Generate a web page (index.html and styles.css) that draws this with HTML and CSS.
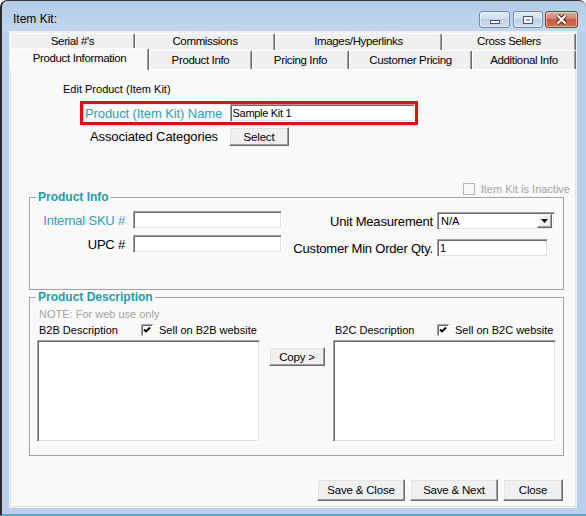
FILE: index.html
```html
<!DOCTYPE html>
<html lang="en">
<head>
<meta charset="UTF-8">
<title>Item Kit</title>
<link rel="stylesheet" href="styles.css">
</head>
<body>
<div class="window">
  <div class="title-bar">
    <span class="title">Item Kit:</span>
    <div class="caption-btns">
      <span class="cap-btn cap-min"><i></i></span>
      <span class="cap-btn cap-max"><i></i></span>
      <span class="cap-btn cap-close">
        <svg width="13" height="11" viewBox="0 0 13 11"><path d="M2.5 1.5L10.5 9.5M10.5 1.5L2.5 9.5" stroke="#5b2418" stroke-width="4.2" fill="none"/><path d="M2.5 1.5L10.5 9.5M10.5 1.5L2.5 9.5" stroke="#fff" stroke-width="2.2" fill="none"/></svg>
      </span>
    </div>
  </div>
  <div class="client">
    <div class="tab-row back">
      <div class="tab" style="width:125px">Serial #'s</div>
      <div class="tab" style="width:140px">Commissions</div>
      <div class="tab" style="width:167px">Images/Hyperlinks</div>
      <div class="tab" style="width:134px">Cross Sellers</div>
    </div>
    <div class="tab-row front">
      <div class="tab selected" style="width:139px">Product Information</div>
      <div class="tab" style="width:103px">Product Info</div>
      <div class="tab" style="width:97px">Pricing Info</div>
      <div class="tab" style="width:123px">Customer Pricing</div>
      <div class="tab" style="width:104px">Additional Info</div>
    </div>
    <div class="panel">
      <div class="edit-title">Edit Product (Item Kit)</div>
      <div class="name-box">
        <span class="name-lbl">Product (Item Kit) Name</span>
        <input class="field name-field" type="text" value="Sample Kit 1">
      </div>
      <div class="cat-row">
        <span class="cat-lbl">Associated Categories</span>
        <button class="btn select-btn">Select</button>
      </div>
      <div class="inactive-row">
        <span class="chk-off"></span>
        <span>Item Kit is Inactive</span>
      </div>

      <div class="group info-group">
        <span class="group-title">Product Info</span>
        <div class="info-col left">
          <div class="form-row"><span class="lbl teal">Internal SKU #</span><input class="field sku" type="text"></div>
          <div class="form-row"><span class="lbl">UPC #</span><input class="field sku" type="text"></div>
        </div>
        <div class="info-col right">
          <div class="form-row">
            <span class="lbl">Unit Measurement</span>
            <div class="field combo"><span>N/A</span><span class="combo-btn"><svg width="7" height="4" viewBox="0 0 7 4"><path d="M0 0H7L3.5 4Z" fill="#000"/></svg></span></div>
          </div>
          <div class="form-row"><span class="lbl">Customer Min Order Qty.</span><input class="field qty" type="text" value="1"></div>
        </div>
      </div>

      <div class="group desc-group">
        <span class="group-title">Product Description</span>
        <div class="note">NOTE: For web use only</div>
        <div class="desc-cols">
          <div class="desc-col">
            <div class="desc-head">
              <span class="desc-lbl">B2B Description</span>
              <svg class="chk" width="12" height="12" viewBox="0 0 12 12"><rect width="12" height="12" fill="#fff"/><path d="M0.5 12V0.5H12" stroke="#a0a0a0" fill="none"/><path d="M1.5 11V1.5H11" stroke="#696969" fill="none"/><path d="M3 5.5L5 7.5L9 3.5" stroke="#000" stroke-width="1.8" fill="none"/></svg>
              <span>Sell on B2B website</span>
            </div>
            <textarea class="field desc-text"></textarea>
          </div>
          <div class="copy-col"><button class="btn copy-btn">Copy &gt;</button></div>
          <div class="desc-col">
            <div class="desc-head">
              <span class="desc-lbl">B2C Description</span>
              <svg class="chk" width="12" height="12" viewBox="0 0 12 12"><rect width="12" height="12" fill="#fff"/><path d="M0.5 12V0.5H12" stroke="#a0a0a0" fill="none"/><path d="M1.5 11V1.5H11" stroke="#696969" fill="none"/><path d="M3 5.5L5 7.5L9 3.5" stroke="#000" stroke-width="1.8" fill="none"/></svg>
              <span>Sell on B2C website</span>
            </div>
            <textarea class="field desc-text"></textarea>
          </div>
        </div>
      </div>

      <div class="actions">
        <button class="btn act">Save &amp; Close</button>
        <button class="btn act">Save &amp; Next</button>
        <button class="btn act close">Close</button>
      </div>
    </div>
  </div>
</div>
</body>
</html>
```

FILE: styles.css
```css
* { box-sizing: border-box; }
body {
    margin: 0;
    background: #fff;
    font-family: "Liberation Sans", Arial, sans-serif;
    font-size: 11px;
    color: #000;
}
.window {
    width: 586px;
    height: 516px;
    background: linear-gradient(180deg, #b5cce7 0px, #c2d7ee 30px, #b9d1ea 31px);
    border-left: 2px solid #2b2b2b;
    border-top: 1px solid #3a3a3a;
    border-bottom: 2px solid #41b4cd;
    border-radius: 7px 7px 0 0;
    padding: 0 9px 6px 7px;
    display: flex;
    flex-direction: column;
}
.title-bar {
    height: 30px;
    display: flex;
    align-items: flex-start;
}
.title {
    font-size: 12px;
    line-height: 14px;
    margin: 11px 0 0 4px;
}
.caption-btns {
    margin: 10px -1px 0 auto;
    display: flex;
}
.cap-btn {
    height: 17px;
    border: 1px solid #6f8cb0;
    border-radius: 3px;
    display: flex;
    align-items: center;
    justify-content: center;
    background: linear-gradient(180deg, #e3ecf7 0%, #d0def0 45%, #bccfe7 50%, #cfe0f2 100%);
    box-shadow: inset 0 0 0 1px rgba(255,255,255,0.45);
}
.cap-min { width: 31px; margin-right: 3px; }
.cap-max { width: 30px; margin-right: 2px; }
.cap-min i {
    width: 10px; height: 4px;
    margin-top: 5px;
    border: 1px solid #3f5470;
    background: #fff;
}
.cap-max i {
    width: 10px; height: 8px;
    border: 1px solid #3f5470;
    background: #fff;
    box-shadow: inset 0 0 0 2px #fff, inset 0 0 0 3px #8fa3bc;
}
.cap-close {
    width: 33px;
    border-color: #8c3a2c;
    background: linear-gradient(180deg, #e8ab9c 0%, #d8806b 45%, #c75a43 50%, #d06e53 100%);
}

/* tab control */
.client {
    flex: 1;
    background: #f0f0f0;
    padding: 2px 1px 1px 1px;
    display: flex;
    flex-direction: column;
}
.tab-row { display: flex; }
.tab-row.back { height: 17px; }
.tab-row.front { height: 19px; }
.tab {
    background: #f0f0f0;
    border-top: 1px solid #fff;
    border-left: 1px solid #fff;
    border-right: 1px solid #696969;
    box-shadow: inset -1px 0 0 #a0a0a0;
    border-radius: 2px 2px 0 0;
    text-align: center;
    font-size: 11.5px;
    letter-spacing: -0.35px;
    line-height: 15px;
}
.front .tab { line-height: 19px; }
.front .tab.selected {
    position: relative;
    z-index: 1;
    height: 22px;
    margin-top: -2px;
    background: #f9f9f9;
    line-height: 18px;
}
.panel {
    flex: 1;
    background: #f9f9f9;
    border: 1px solid #e3e3e3;
    border-top-color: #fff;
}

.edit-title {
    margin: 12px 0 0 52px;
    line-height: 14px;
}
.name-box {
    margin: 5px 0 0 69px;
    width: 338px;
    height: 24px;
    border: 3px solid #e60a12;
    display: flex;
    align-items: center;
}
.name-lbl {
    width: 147px;
    padding-left: 2px;
    font-size: 13px;
    letter-spacing: -0.1px;
    color: #2ea3ad;
}
.field {
    border: 1px solid;
    border-color: #a0a0a0 #fff #fff #a0a0a0;
    box-shadow: inset 1px 1px 0 #696969, inset -1px -1px 0 #e3e3e3;
    background: #fff;
    font-family: "Liberation Sans", Arial, sans-serif;
    font-size: 11px;
    padding: 0 2px;
    margin: 0;
    outline: none;
    color: #000;
}
.name-field {
    width: 186px;
    height: 18px;
    letter-spacing: -0.3px;
}
.cat-row {
    margin: 2px 0 0 79px;
    height: 19px;
    display: flex;
    align-items: center;
}
.cat-lbl {
    width: 139px;
    font-size: 13px;
    letter-spacing: -0.1px;
}
.btn {
    border: 1px solid;
    border-color: #fff #696969 #696969 #fff;
    box-shadow: inset -1px -1px 0 #a0a0a0, inset 1px 1px 0 #e3e3e3;
    background: #f0f0f0;
    font-family: "Liberation Sans", Arial, sans-serif;
    font-size: 11.5px;
    letter-spacing: -0.2px;
    color: #000;
    padding: 0;
    margin: 0;
}
.select-btn { width: 60px; height: 19px; }

.inactive-row {
    margin-top: 36px;
    height: 13px;
    display: flex;
    align-items: center;
    justify-content: flex-end;
    gap: 6px;
    padding-right: 5px;
    color: #a3a3a3;
}
.chk-off {
    width: 12px;
    height: 12px;
    border: 1px solid #b5b5b5;
    background: #f9f9f9;
}

/* group boxes */
.group {
    position: relative;
    margin-left: 18px;
    width: 535px;
    border: 1px solid #a0a0a0;
    box-shadow: inset 1px 1px 0 #fff;
}
.group-title {
    position: absolute;
    top: -8px;
    left: 6px;
    padding: 0 2px;
    background: #f9f9f9;
    font-size: 12px;
    font-weight: bold;
    line-height: 14px;
    color: #1c9ea3;
}
.info-group {
    margin-top: 2px;
    height: 93px;
    display: flex;
    padding-top: 13px;
}
.info-col { display: flex; flex-direction: column; }
.info-col.left { width: 252px; gap: 6px; }
.info-col.right { padding-top: 1px; gap: 9px; }
.form-row {
    display: flex;
    align-items: center;
    height: 18px;
}
.lbl {
    font-size: 13px;
    letter-spacing: -0.2px;
    text-align: right;
}
.left .lbl { width: 95px; margin-right: 8px; }
.right .lbl { width: 151px; margin-right: 4px; }
.teal { color: #2ea3ad; }
.sku { width: 149px; height: 18px; }
.qty { width: 111px; height: 18px; }
.combo {
    width: 118px;
    height: 18px;
    display: flex;
    align-items: center;
    justify-content: space-between;
    padding: 0 2px 0 3px;
}
.combo-btn {
    width: 15px;
    height: 14px;
    border: 1px solid;
    border-color: #f0f0f0 #696969 #696969 #f0f0f0;
    box-shadow: inset -1px -1px 0 #a0a0a0, inset 1px 1px 0 #fff;
    background: #f0f0f0;
    display: flex;
    align-items: center;
    justify-content: center;
}

.desc-group {
    margin-top: 7px;
    height: 159px;
    padding-top: 9px;
}
.note {
    padding-left: 9px;
    line-height: 14px;
    color: #a3a3a3;
}
.desc-cols {
    margin: 1px 0 0 7px;
    display: flex;
}
.desc-col { width: 223px; }
.desc-head {
    height: 16px;
    display: flex;
    align-items: center;
}
.desc-lbl { width: 104px; padding-left: 2px; }
.chk { margin-right: 6px; }
.desc-text {
    display: block;
    width: 223px;
    height: 102px;
    margin-top: 2px;
    resize: none;
}
.copy-col { margin: 0 8px 0 9px; padding-top: 25px; }
.copy-btn { width: 56px; height: 19px; }

.actions {
    margin-top: 23px;
    display: flex;
    justify-content: flex-end;
    gap: 5px;
    padding-right: 12px;
}
.act { width: 88px; height: 22px; }
.act.close { width: 60px; }
```
